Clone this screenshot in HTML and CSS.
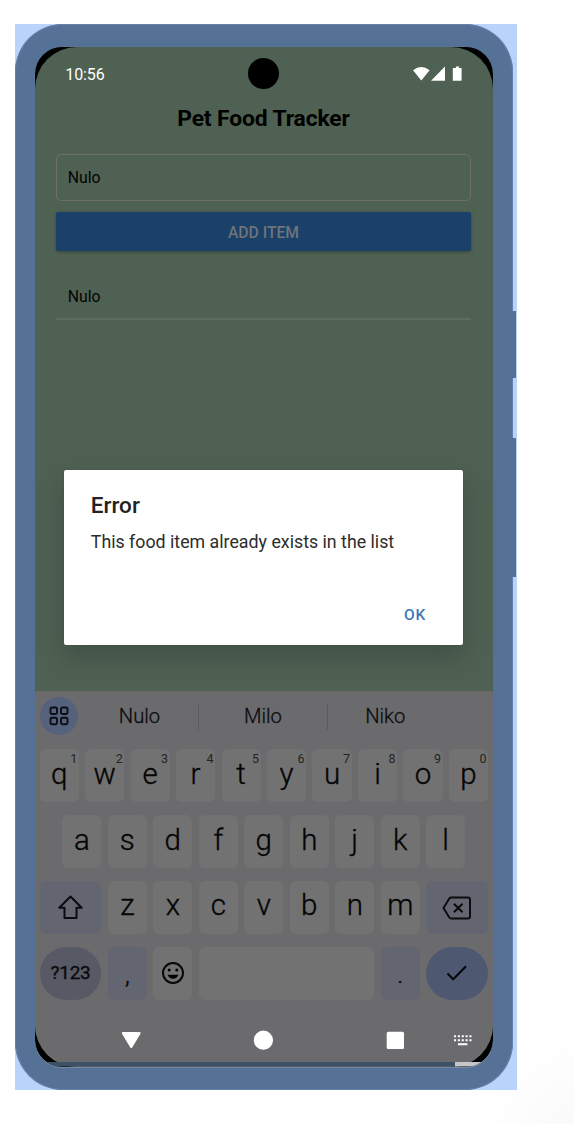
FILE: index.html
```html
<!DOCTYPE html>
<html lang="en">
<head>
<meta charset="utf-8">
<title>Pet Food Tracker</title>
<link rel="stylesheet" href="styles.css">
</head>
<body>
<main class="stage">
  <div class="phone">
    <div class="bezel">
      <div class="screen">
        <header class="status">
          <span class="clock">10:56</span>
          <span class="camera"></span>
          <svg class="status-icons" width="50" height="16" viewBox="0 0 50 16" fill="#fff">
            <path d="M0 4.2Q8.300 -2.300 16.600 4.200L8.300 14.600Z"/>
            <path d="M18 14.800L32 .6V14.800Z"/>
            <path d="M40.900 1.900h2V.6h3.200v1.300h2q.5 0 .5.500V14.200q0 .600-.6.600h-7.700q-.5 0-.5-.600V2.500q0-.600.6-.600Z"/>
          </svg>
        </header>
        <section class="app">
          <h1 class="title">Pet Food Tracker</h1>
          <div class="field">Nulo</div>
          <div class="add">ADD ITEM</div>
          <div class="item">Nulo</div>
        </section>
        <section class="keyboard">
          <div class="suggestions">
            <span class="apps"><svg width="20" height="20" viewBox="0 0 20 20" fill="none" stroke="#0b0e16" stroke-width="1.900"><rect x="1.500" y="1.500" width="6.500" height="6.500" rx="1.500"/><rect x="12" y="1.500" width="6.500" height="6.500" rx="1.500"/><rect x="1.500" y="11.700" width="6.500" height="6.500" rx="1.500"/><rect x="12" y="11.700" width="6.500" height="6.500" rx="1.500"/></svg></span>
            <span class="word first">Nulo</span><span class="word second">Milo</span><span class="word third">Niko</span>
          </div>
          <div class="row">
            <span class="key">q<sup>1</sup></span><span class="key">w<sup>2</sup></span><span class="key">e<sup>3</sup></span><span class="key">r<sup>4</sup></span><span class="key">t<sup>5</sup></span><span class="key">y<sup>6</sup></span><span class="key">u<sup>7</sup></span><span class="key">i<sup>8</sup></span><span class="key">o<sup>9</sup></span><span class="key">p<sup>0</sup></span>
          </div>
          <div class="row middle">
            <span class="key">a</span><span class="key">s</span><span class="key">d</span><span class="key">f</span><span class="key">g</span><span class="key">h</span><span class="key">j</span><span class="key">k</span><span class="key">l</span>
          </div>
          <div class="row">
            <span class="key wide tinted"><svg width="28" height="28" viewBox="0 0 28 28" fill="none" stroke="#0b0c10" stroke-width="2" stroke-linejoin="round"><path d="M13.500 3.500L24.700 14.800H19.500V25H7.500V14.800H2.300Z"/></svg></span>
            <span class="key">z</span><span class="key">x</span><span class="key">c</span><span class="key">v</span><span class="key">b</span><span class="key">n</span><span class="key">m</span>
            <span class="key wide tinted"><svg class="delete" width="30" height="24" viewBox="0 0 30 24" fill="none" stroke="#0b0c10" stroke-width="2" stroke-linejoin="round"><path d="M9.200 1.500H26Q28 1.500 28 3.500V20.500Q28 22.500 26 22.500H9.200Q8 22.500 7.300 21.500L1.500 12L7.300 2.500Q8 1.500 9.200 1.500ZM11.900 7.700L20.500 16.300M20.500 7.700L11.900 16.300"/></svg></span>
          </div>
          <div class="row">
            <span class="key wide symbols">?123</span>
            <span class="key tinted mark">,</span>
            <span class="key"><svg width="24" height="24" viewBox="0 0 24 24"><circle cx="12" cy="12" r="10" fill="none" stroke="#080808" stroke-width="2"/><circle cx="8.200" cy="8.900" r="1.500"/><circle cx="15.800" cy="8.900" r="1.500"/><path d="M6.500 13.800H17.500Q15.800 17.800 12 17.800T6.500 13.800Z"/></svg></span>
            <span class="key space"></span>
            <span class="key tinted mark">.</span>
            <span class="key wide enter"><svg width="22" height="18" viewBox="0 0 22 18" fill="none" stroke="#05070b" stroke-width="2.100"><path d="M1.500 9.500L7.200 15.200L20 2.300"/></svg></span>
          </div>
          <nav class="nav">
            <svg width="458" height="30" viewBox="0 0 458 30" fill="#fff">
              <path d="M88 7H104.500Q106.300 7 105.500 8.800L97.200 22.600Q96.200 23.800 95.300 22.600L87 8.800Q86.200 7 88 7Z"/>
              <circle cx="228.400" cy="15.200" r="9.600"/>
              <rect x="351.700" y="6.700" width="17.300" height="17.300" rx="1.500"/>
              <path d="M423 19.200h9.400" stroke="#fff" stroke-width="2"/>
              <path d="M419 11.300h17.500M419 15.200h17.500" stroke="#fff" stroke-width="2.100" stroke-dasharray="2.100 1.750"/>
            </svg>
          </nav>
        </section>
        <section class="dialog">
          <h2>Error</h2>
          <p>This food item already exists in the list</p>
          <div class="ok">OK</div>
        </section>
      </div>
      <div class="edge"></div>
    </div>
    <span class="side-button power"></span>
    <span class="side-button volume"></span>
  </div>
</main>
</body>
</html>
```
FILE: styles.css
```css
* { box-sizing: border-box; }
body {
  margin: 0;
  background: #fff;
  font-family: Roboto, sans-serif;
  overflow: hidden;
}
.stage {
  height: 1124px;
  padding: 24px 0 0 15.400px;
  background: radial-gradient(circle at 620px 1170px, #f4f4f4 0, #fafafa 65px, #fff 150px);
}
.phone {
  position: relative;
  width: 501.300px;
  height: 1066px;
  background: #b8d4fb;
}
.side-button {
  position: absolute;
  left: 495.600px;
  width: 5.200px;
  background: #557196;
}
.power { top: 287px; height: 67px; }
.volume { top: 414px; height: 138.500px; }
.bezel {
  position: relative;
  width: 498px;
  height: 1066px;
  padding: 22.500px 20.400px 23.500px 19.400px;
  border-radius: 48px;
  background: #557196;
  box-shadow: inset 0 0 0 1px #6583aa;
}
.bezel::before {
  content: "";
  position: absolute;
  inset: 22.500px 20.400px 23.500px 19.400px;
  border-radius: 27px;
  background: #000;
}
.screen {
  position: relative;
  height: 1020px;
  border-radius: 42px;
  background: #4f6152;
  overflow: hidden;
}
.edge {
  position: absolute;
  inset: 22.500px 20.400px 23.500px 19.400px;
  border-radius: 27px;
  background: linear-gradient(90deg, #3d5265 420px, #c5c6c9 420px) 0 100% / 100% 4.500px no-repeat;
  box-shadow: 0 1px 0 #7888a2;
}
.status {
  display: grid;
  grid-template-columns: 1fr 31px 1fr;
  align-items: center;
  height: 54.500px;
  padding: 0 30.500px 0 30.500px;
}
.clock { padding-top: 1px; color: #fff; font-size: 16px; letter-spacing: -.1px; }
.camera { width: 31px; height: 31px; margin-left: -.5px; border-radius: 50%; background: #000; }
.status-icons { justify-self: end; margin-top: 1px; }
.app {
  height: 590px;
  padding: 0 22.300px 0 21.500px;
}
.title {
  margin: 0;
  height: 53px;
  line-height: 35px;
  font-size: 22.800px;
  font-weight: 700;
  letter-spacing: -.1px;
  text-align: center;
  color: #000;
}
.field {
  height: 46.800px;
  padding-left: 10.500px;
  border: 1px solid #6f6e6a;
  border-radius: 5px;
  font-size: 15.800px;
  line-height: 46px;
  color: #030403;
}
.add {
  height: 39px;
  margin-top: 11px;
  border-radius: 2px;
  background: #1b416b;
  box-shadow: 0 1px 3px #34463a;
  color: #6e7479;
  font-size: 15.700px;
  font-weight: 500;
  line-height: 41px;
  text-align: center;
}
.item {
  height: 47px;
  margin-top: 22px;
  padding-left: 11.500px;
  border-bottom: 2px solid #5f6c61;
  font-size: 15.800px;
  line-height: 47px;
  color: #030403;
}
.keyboard {
  display: flex;
  flex-direction: column;
  gap: 13.400px;
  height: 376px;
  padding: 0 4.800px;
  background: #6b6b6d;
}
.suggestions {
  display: flex;
  align-items: center;
  height: 45px;
  padding-top: 5px;
}
.apps {
  display: grid;
  place-items: center;
  width: 38px;
  height: 38px;
  margin-left: .7px;
  border-radius: 50%;
  background: #56617c;
}
.word {
  height: 27px;
  font-size: 20.200px;
  line-height: 27px;
  font-weight: 300;
  -webkit-text-stroke: .3px #0c0c0d;
  text-align: center;
  color: #0c0c0d;
}
.first { width: 120.500px; padding-left: 3px; border-right: 1px solid #5d5d5f; }
.second { width: 129.500px; border-right: 1px solid #5d5d5f; }
.third { width: 114px; }
.row {
  display: flex;
  flex: none;
  gap: 6.400px;
  height: 52.500px;
}
.middle { padding: 0 22.700px; }
.key {
  position: relative;
  display: flex;
  align-items: center;
  justify-content: center;
  flex: none;
  width: 39.100px;
  padding-bottom: 4px;
  border-radius: 6px;
  background: #727272;
  font-size: 29.500px;
  font-weight: 300;
  -webkit-text-stroke: .35px #050505;
  line-height: 48px;
  color: #050505;
}
.key > svg { margin-top: 4px; }
.key sup {
  position: absolute;
  top: 3px;
  right: 1.500px;
  font-size: 12.500px;
  font-weight: 400;
  -webkit-text-stroke: 0;
  line-height: 14px;
  color: #232324;
}
.wide { width: 61.850px; }
.tinted { background: #636570; }
.symbols {
  padding-bottom: 0;
  border-radius: 27px;
  background: #575a64;
  font-size: 19px;
  font-weight: 400;
  letter-spacing: -.3px;
  color: #0b0d13;
}
.mark { padding: 4px 0 0; font-size: 25px; }
.space { width: 175.600px; }
.enter { border-radius: 27px; background: #4e5870; }
.key > .delete { margin-top: 6px; }
.nav {
  height: 30px;
  margin: 12px -4.800px 0;
}
.nav svg { display: block; }
.dialog {
  position: absolute;
  left: 29px;
  top: 423px;
  width: 399.600px;
  height: 175.500px;
  padding: 22.500px 27px;
  border-radius: 2px;
  background: #fff;
  box-shadow: 0 12px 24px rgba(40, 52, 51, .38), 0 0 1px rgba(20, 30, 20, .3);
}
.dialog h2 {
  margin: 0;
  font-size: 22.500px;
  font-weight: 500;
  line-height: 27px;
  color: #222;
}
.dialog p {
  margin: 12px 0 0;
  font-size: 17.800px;
  line-height: 22px;
  white-space: nowrap;
  color: #2c2c2c;
}
.ok {
  margin: 51px 10px 0;
  font-size: 15.500px;
  font-weight: 500;
  line-height: 22px;
  letter-spacing: 1px;
  text-align: right;
  color: #3b78b5;
}
```
